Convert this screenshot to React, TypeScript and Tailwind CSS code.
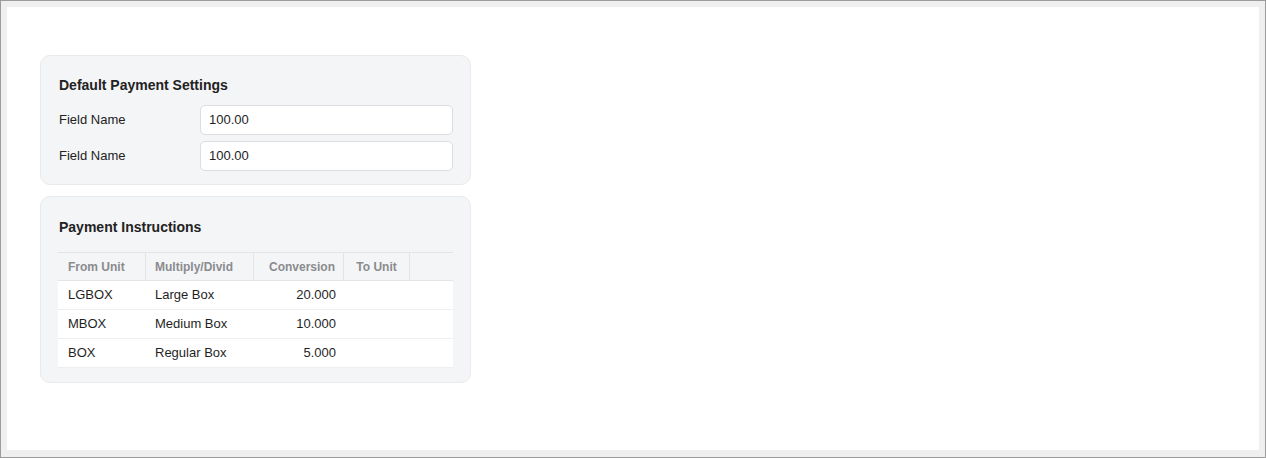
import React from "react";

const rows = [
  { from: "LGBOX", md: "Large Box", conv: "20.000" },
  { from: "MBOX", md: "Medium Box", conv: "10.000" },
  { from: "BOX", md: "Regular Box", conv: "5.000" },
];

export default function App() {
  return (
    <div
      className="h-[458px] w-full border border-[#9c9c9c] bg-[#efefef] pt-[6px] pl-[6px] pr-[6px] pb-[7px]"
      style={{ fontFamily: '"Liberation Sans", Arial, sans-serif' }}
    >
      <div className="h-full bg-white pl-[33px] pt-[48px]">
        <div className="flex w-[431px] flex-col gap-[11px]">
          <div className="rounded-[10px] border border-[#e9eaec] bg-[#f4f5f7] pl-[18px] pr-[17px] pt-[18px] pb-[13px]">
            <div className="text-[14px] font-bold leading-[22px] text-[#222]">Default Payment Settings</div>
            <div className="mt-[9px] flex flex-col gap-[6px]">
              {[0, 1].map((i) => (
                <div key={i} className="flex items-center">
                  <div className="w-[141px] text-[13px] text-[#222]">Field Name</div>
                  <div className="flex h-[30px] flex-1 items-center rounded-[5px] border border-[#dcdde0] bg-white px-[8px] text-[13px] text-[#222]">
                    100.00
                  </div>
                </div>
              ))}
            </div>
          </div>
          <div className="rounded-[10px] border border-[#e9eaec] bg-[#f4f5f7] pl-[17px] pr-[17px] pt-[19px] pb-[14px]">
            <div className="pl-[1px] text-[14px] font-bold leading-[22px] text-[#222]">Payment Instructions</div>
            <div className="mt-[14px]">
              <div className="flex h-[29px] items-center border-t border-b border-[#e3e4e7] text-[12px] font-bold text-[#8a8b8e]">
                <div className="flex h-full w-[88px] items-center border-r border-[#e3e4e7] pl-[10px]">From Unit</div>
                <div className="flex h-full w-[108px] items-center border-r border-[#e3e4e7] pl-[9px]">Multiply/Divid</div>
                <div className="flex h-full w-[90px] items-center justify-end border-r border-[#e3e4e7] pr-[8px]">Conversion</div>
                <div className="flex h-full w-[66px] items-center justify-center border-r border-[#e3e4e7]">To Unit</div>
                <div className="h-full flex-1" />
              </div>
              {rows.map((r) => (
                <div key={r.from} className="flex h-[29px] items-center border-b border-[#eceef0] bg-white text-[13px] text-[#1f1f1f]">
                  <div className="w-[88px] pl-[10px]">{r.from}</div>
                  <div className="w-[108px] pl-[9px]">{r.md}</div>
                  <div className="w-[90px] pr-[8px] text-right">{r.conv}</div>
                  <div className="w-[66px]" />
                  <div className="flex-1" />
                </div>
              ))}
            </div>
          </div>
        </div>
      </div>
    </div>
  );
}
